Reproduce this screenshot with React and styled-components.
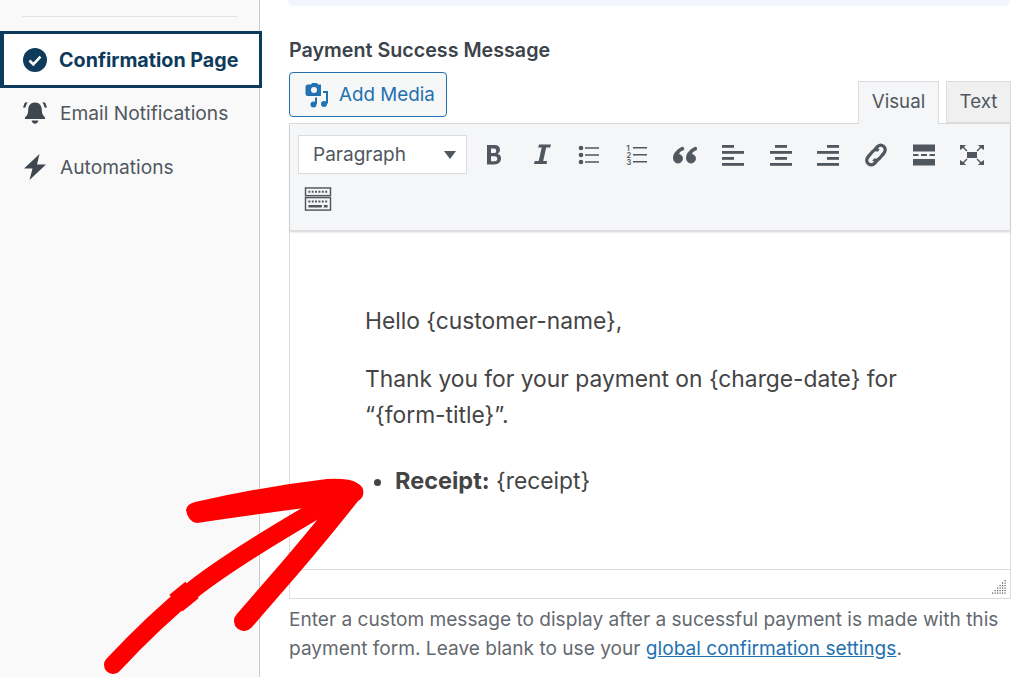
import styled, { createGlobalStyle } from 'styled-components';

const GlobalStyle = createGlobalStyle`
  html, body {
    margin: 0;
    padding: 0;
    background: #fff;
  }
  body {
    font-family: Inter, "Liberation Sans", sans-serif;
    color: #3c434a;
  }
`;

const Page = styled.div`
  position: relative;
  display: grid;
  grid-template-columns: 260px 1fr;
  width: 1024px;
  height: 677px;
  overflow: hidden;
`;

const Sidebar = styled.aside`
  background: #f9f9f9;
  border-right: 1px solid #c9cbce;
  box-sizing: border-box;
  padding-top: 16px;
`;

const Divider = styled.div`
  height: 1px;
  margin: 0 22px 14px;
  background: #e2e3e5;
`;

const NavItem = styled.div`
  display: flex;
  align-items: center;
  gap: 12px;
  box-sizing: border-box;
  height: ${(props) => (props.active ? '57px' : '54px')};
  padding-left: ${(props) => (props.active ? '19px' : '22px')};
  padding-bottom: ${(props) => (props.active ? '0' : '4px')};
  font-size: ${(props) => (props.active ? '19.7px' : '19.2px')};
  font-weight: ${(props) => (props.active ? 700 : 400)};
  color: ${(props) => (props.active ? '#0e3a5c' : '#50575e')};
  background: ${(props) => (props.active ? '#fff' : 'transparent')};
  border: ${(props) => (props.active ? '3px solid #0e3a5c' : 'none')};
  border-left-width: ${(props) => (props.active ? '4px' : '0')};
  width: ${(props) => (props.active ? '262px' : 'auto')};
  position: relative;
`;

const Main = styled.main`
  padding: 0 13px 0 29px;
  min-width: 0;
`;

const Notice = styled.div`
  height: 6px;
  margin-left: -1px;
  margin-right: 1px;
  background: #f3f5fc;
  border-radius: 0 0 6px 6px;
`;

const FieldLabel = styled.div`
  margin-top: 33px;
  font-size: 19.7px;
  line-height: 22px;
  font-weight: 600;
  color: #3c434a;
`;

const EditorTop = styled.div`
  display: flex;
  justify-content: space-between;
  align-items: flex-end;
  height: 63px;
  margin-top: -1px;
`;

const MediaButton = styled.button`
  display: flex;
  align-items: center;
  gap: 9px;
  box-sizing: border-box;
  width: 158px;
  height: 45px;
  margin: 0 0 6px;
  padding: 0 0 0 14px;
  font: inherit;
  font-size: 18.8px;
  color: #2271b1;
  background: #f6f7f7;
  border: 1.5px solid #2271b1;
  border-radius: 4px;
`;

const Tabs = styled.div`
  display: flex;
  gap: 7px;
  align-items: flex-end;
`;

const Tab = styled.div`
  display: flex;
  align-items: center;
  justify-content: center;
  box-sizing: border-box;
  width: ${(props) => props.width};
  height: ${(props) => (props.active ? '43px' : '42px')};
  margin-bottom: ${(props) => (props.active ? '-1px' : '0')};
  padding-bottom: ${(props) => (props.active ? '4px' : '2px')};
  font-size: 18.7px;
  color: #50575e;
  background: ${(props) => (props.active ? '#f5f6f7' : '#f0f0f1')};
  border: 1px solid #dcdcde;
  border-bottom: ${(props) => (props.active ? 'none' : '1px solid #dcdcde')};
  position: relative;
`;

const Editor = styled.div`
  border: 1px solid #dcdcde;
  display: flex;
  flex-direction: column;
  height: 476px;
  box-sizing: border-box;
`;

const Toolbar = styled.div`
  height: 107px;
  box-sizing: border-box;
  padding: 11px 8px 0;
  background: #f5f6f7;
  border-bottom: 1px solid #dcdcde;
  box-shadow: 0 1px 2px rgba(0, 0, 0, 0.18);
  flex: none;
`;

const ToolRow = styled.div`
  display: flex;
  align-items: center;
  height: 39px;
`;

const FormatSelect = styled.div`
  display: flex;
  align-items: center;
  justify-content: space-between;
  box-sizing: border-box;
  width: 169px;
  height: 39px;
  padding: 0 10px 0 14px;
  font-size: 19px;
  color: #50575e;
  background: #fff;
  border: 1px solid #dcdcde;
  margin-right: 3px;
`;

const Caret = styled.span`
  width: 0;
  height: 0;
  border-left: 6px solid transparent;
  border-right: 6px solid transparent;
  border-top: 8px solid #50575e;
`;

const ToolIcon = styled.span`
  display: flex;
  align-items: center;
  justify-content: center;
  width: ${(props) => props.width || '47.8px'};
  height: 39px;
  flex: none;
`;

const KeyboardRow = styled(ToolRow)`
  margin-top: 6px;
`;

const Body = styled.div`
  flex: 1;
  padding: 72px 40px 0 75px;
  font-size: 22.8px;
  line-height: 36px;
  color: #444;
  min-height: 0;
`;

const Para = styled.p`
  margin: 0 0 22px;
`;

const BulletList = styled.ul`
  margin: 30px 0 0;
  padding-left: 30px;
`;

const BoldLabel = styled.strong`
  font-size: 23.5px;
`;

const StatusBar = styled.div`
  position: relative;
  height: 29px;
  flex: none;
  background: #fff;
  border-top: 1px solid #dcdcde;
  box-sizing: border-box;
`;

const Grip = styled.svg`
  position: absolute;
  right: 3px;
  bottom: 3px;
`;

const Help = styled.p`
  margin: 6px 0 0;
  font-size: 19.1px;
  line-height: 29px;
  color: #646970;
  white-space: nowrap;
`;

const HelpLink = styled.a`
  color: #2271b1;
  text-decoration: underline;
`;

const ArrowOverlay = styled.svg`
  position: absolute;
  left: 0;
  top: 0;
  pointer-events: none;
`;

const ink = '#50575e';

function CheckBadge() {
  return (
    <svg width="24" height="24" viewBox="0 0 24 24">
      <circle cx="12" cy="12" r="12" fill="#0e3a5c" />
      <path d="M6.5 12.5l3.8 3.8 7.2-7.6" fill="none" stroke="#fff" strokeWidth="2.6" />
    </svg>
  );
}

function BellIcon() {
  return (
    <svg width="26" height="26" viewBox="0 0 26 26" fill="#3f4650">
      <path d="M13 2.5c4.5 0 6.8 3.3 6.8 7.4 0 3.6 1.2 5.7 3.2 7.6v1.5H3v-1.5c2-1.9 3.2-4 3.2-7.6 0-4.1 2.3-7.4 6.8-7.4z" />
      <path d="M9.5 20.5h7c-.4 2-1.8 3.2-3.5 3.2s-3.1-1.2-3.5-3.2z" />
      <path d="M1 7.5L2.7 2.7 5.5 2 3.200 7.800zM25 7.500L23.300 2.700 20.500 2 22.800 7.800z" />
    </svg>
  );
}

function BoltIcon() {
  return (
    <svg width="26" height="28" viewBox="0 0 26 28" fill="#3f4650">
      <path d="M17.500 1L2 15.500h8.500L7.500 27 24 11.500h-9z" />
    </svg>
  );
}

function MediaIcon() {
  return (
    <svg width="26" height="26" viewBox="0 0 26 26" fill="#2271b1">
      <path d="M4 2.500h3l1-1.500h5l1 1.500h3v11.500H4c-1.500 0-2.500-.8-2.500-2.500V5c0-1.500 1-2.500 2.500-2.500z" />
      <circle cx="10" cy="8" r="3" fill="#f6f7f7" />
      <path d="M12 15.500v6.500" stroke="#2271b1" strokeWidth="2" />
      <circle cx="9.500" cy="22.500" r="3" />
      <path d="M19 9h5v12.500h-2V11h-3z" />
      <circle cx="20" cy="22" r="3" />
    </svg>
  );
}

function BoldIcon() {
  return (
    <svg width="16" height="22" viewBox="0 0 16 22">
      <path fillRule="evenodd" fill={ink} d="M1 1h7.500c3.500 0 5.500 1.700 5.500 4.800 0 1.900-1 3.300-2.500 4 2.200.6 3.500 2.200 3.500 4.500 0 3.800-2.700 6.200-6.500 6.200H1zM5 4.500v4.500h3c1.500 0 2.200-.9 2.200-2.300S9.500 4.500 8 4.500zM5 12.200v5h3.800c1.700 0 2.500-1 2.500-2.500s-.8-2.500-2.500-2.500z" />
    </svg>
  );
}

function ItalicIcon() {
  return (
    <svg width="18" height="21" viewBox="0 0 18 21">
      <path fill={ink} d="M6 0.500h12l-.8 3h-4l-3 13.500h4L13.500 20H1l.7-3h4L8.700 3.500h-3.500z" />
    </svg>
  );
}

function BulletsIcon() {
  return (
    <svg width="22" height="20" viewBox="0 0 22 20" fill={ink}>
      <circle cx="3" cy="3" r="2.300" />
      <circle cx="3" cy="10" r="2.300" />
      <circle cx="3" cy="17" r="2.300" />
      <path d="M7 2.300h14v1.500H7zM7 9.300h14v1.500H7zM7 16.300h14v1.500H7z" />
    </svg>
  );
}

function NumbersIcon() {
  return (
    <svg width="22" height="22" viewBox="0 0 22 22" fill={ink}>
      <text x="0.500" y="7" fontSize="7.500" fontWeight="600" fontFamily="Inter, sans-serif">1</text>
      <text x="0.500" y="14" fontSize="7.500" fontWeight="600" fontFamily="Inter, sans-serif">2</text>
      <text x="0.500" y="21" fontSize="7.500" fontWeight="600" fontFamily="Inter, sans-serif">3</text>
      <path d="M7 3h14v1.500H7zM7 10h14v1.500H7zM7 17h14v1.500H7z" />
    </svg>
  );
}

function QuoteIcon() {
  return (
    <svg width="24" height="18" viewBox="0 0 24 18" fill={ink} stroke={ink} strokeWidth="0.900">
      <path d="M10 1C4.500 3 .500 7 .500 12c0 3 2 5 4.500 5s4.500-2 4.500-4.500S7.700 8.500 5.500 8.500C6 6 8 4.500 11 3.500zM23 1c-5.500 2-9.500 6-9.500 11 0 3 2 5 4.500 5s4.500-2 4.500-4.500-1.800-4-4-4c.5-2.500 2.500-4 5.500-5z" />
    </svg>
  );
}

// align lines: x/width per bar
function AlignIcon({ bars }) {
  return (
    <svg width="22" height="22" viewBox="0 0 22 22" fill={ink}>
      {bars.map(([x, w], i) => (
        <rect key={i} x={x} y={1 + i * 6} width={w} height="2.800" />
      ))}
    </svg>
  );
}

function LinkIcon() {
  return (
    <svg width="28" height="28" viewBox="0 0 26 26" fill="none" stroke={ink} strokeWidth="3">
      <path d="M11.500 8.500l2-2.500c2-2.200 4.500-2.800 6.500-1.200 2.200 1.800 2 4.500.2 6.700l-4 4.700c-1.800 2-3.900 2.300-5.700 1" />
      <path d="M14.500 17.500l-2 2.500c-2 2.200-4.500 2.800-6.500 1.200-2.200-1.800-2-4.500-.2-6.700l4-4.700c1.800-2 3.900-2.300 5.700-1" />
    </svg>
  );
}

function MoreIcon() {
  return (
    <svg width="22" height="22" viewBox="0 0 22 22" fill={ink}>
      <rect x="0" y="0.500" width="22" height="7" />
      <rect x="0" y="10" width="5.500" height="2" />
      <rect x="8" y="10" width="6" height="2" />
      <rect x="16.500" y="10" width="5.500" height="2" />
      <rect x="0" y="15" width="22" height="6.500" />
    </svg>
  );
}

function FullscreenIcon() {
  return (
    <svg width="26" height="22" viewBox="0 0 26 22" fill={ink}>
      <rect x="8" y="8" width="10" height="6" />
      <path d="M1 1h6L5 3l3.500 3.500-1 1L4 4 1 6zM25 1h-6l2 2-3.500 3.500 1 1L22 4l3 2zM1 21h6l-2-2 3.500-3.500-1-1L4 18l-3-2zM25 21h-6l2-2-3.500-3.500 1-1L22 18l3-2z" />
    </svg>
  );
}

function KeyboardIcon() {
  return (
    <svg width="28" height="25" viewBox="0 0 28 26">
      <g fill="none" stroke={ink} strokeWidth="1.500">
        <rect x="1" y="1" width="26" height="8" />
        <rect x="1" y="11" width="26" height="13" />
      </g>
      <path stroke={ink} strokeWidth="2" strokeDasharray="2 1.500" d="M4 5h20M4 15h20" />
      <path stroke={ink} strokeWidth="2.500" d="M4 20h14M20 20h4" />
    </svg>
  );
}

function ResizeGrip() {
  const dots = [];
  for (let row = 0; row < 6; row++) {
    for (let col = 5 - row; col < 6; col++) {
      dots.push(<rect key={`${row}-${col}`} x={col * 2.5} y={row * 2.5} width="1.200" height="1.200" />);
    }
  }
  return (
    <Grip width="15" height="15" viewBox="0 0 15 15" fill="#50575e">
      {dots}
    </Grip>
  );
}

export default function App() {
  return (
    <>
      <GlobalStyle />
      <Page>
        <Sidebar>
          <Divider />
          <NavItem active>
            <CheckBadge />
            Confirmation Page
          </NavItem>
          <NavItem>
            <BellIcon />
            Email Notifications
          </NavItem>
          <NavItem>
            <BoltIcon />
            Automations
          </NavItem>
        </Sidebar>
        <Main>
          <Notice />
          <FieldLabel>Payment Success Message</FieldLabel>
          <EditorTop>
            <MediaButton>
              <MediaIcon />
              Add Media
            </MediaButton>
            <Tabs>
              <Tab active width="81px">Visual</Tab>
              <Tab width="65px">Text</Tab>
            </Tabs>
          </EditorTop>
          <Editor>
            <Toolbar>
              <ToolRow>
                <FormatSelect>
                  Paragraph
                  <Caret />
                </FormatSelect>
                <ToolIcon><BoldIcon /></ToolIcon>
                <ToolIcon><ItalicIcon /></ToolIcon>
                <ToolIcon><BulletsIcon /></ToolIcon>
                <ToolIcon><NumbersIcon /></ToolIcon>
                <ToolIcon><QuoteIcon /></ToolIcon>
                <ToolIcon><AlignIcon bars={[[0, 12], [0, 22], [0, 12], [0, 22]]} /></ToolIcon>
                <ToolIcon><AlignIcon bars={[[5, 12], [0, 22], [5, 12], [0, 22]]} /></ToolIcon>
                <ToolIcon><AlignIcon bars={[[10, 12], [0, 22], [10, 12], [0, 22]]} /></ToolIcon>
                <ToolIcon><LinkIcon /></ToolIcon>
                <ToolIcon><MoreIcon /></ToolIcon>
                <ToolIcon><FullscreenIcon /></ToolIcon>
              </ToolRow>
              <KeyboardRow>
                <ToolIcon width="40px"><KeyboardIcon /></ToolIcon>
              </KeyboardRow>
            </Toolbar>
            <Body>
              <Para>Hello {'{customer-name}'},</Para>
              <Para>
                Thank you for your payment on {'{charge-date}'} for
                <br />
                “{'{form-title}'}”.
              </Para>
              <BulletList>
                <li>
                  <BoldLabel>Receipt:</BoldLabel> {'{receipt}'}
                </li>
              </BulletList>
            </Body>
            <StatusBar>
              <ResizeGrip />
            </StatusBar>
          </Editor>
          <Help>
            Enter a custom message to display after a sucessful payment is made with this
            <br />
            payment form. Leave blank to use your <HelpLink href="#">global confirmation settings</HelpLink>.
          </Help>
        </Main>
        <ArrowOverlay width="1024" height="677" viewBox="0 0 1024 677">
          <path
            fill="#ff0000"
            d="M186 510 Q187 504 195 502 Q260 487 327 479 Q350 478 357 483 Q365 487 363 495 Q361 503 345 503 Q270 512 197 523 Q188 522 186 510 Z"
          />
          <g fill="none" stroke="#ff0000" strokeLinecap="round">
            <path strokeWidth="18" d="M113 665 Q155 620 195 588 Q235 557 325 505" />
            <path strokeWidth="20" d="M244 621 L290 568 Q325 527 350 495" />
            <path strokeWidth="21" strokeLinecap="butt" d="M176 603 L192 590" />
          </g>
        </ArrowOverlay>
      </Page>
    </>
  );
}
